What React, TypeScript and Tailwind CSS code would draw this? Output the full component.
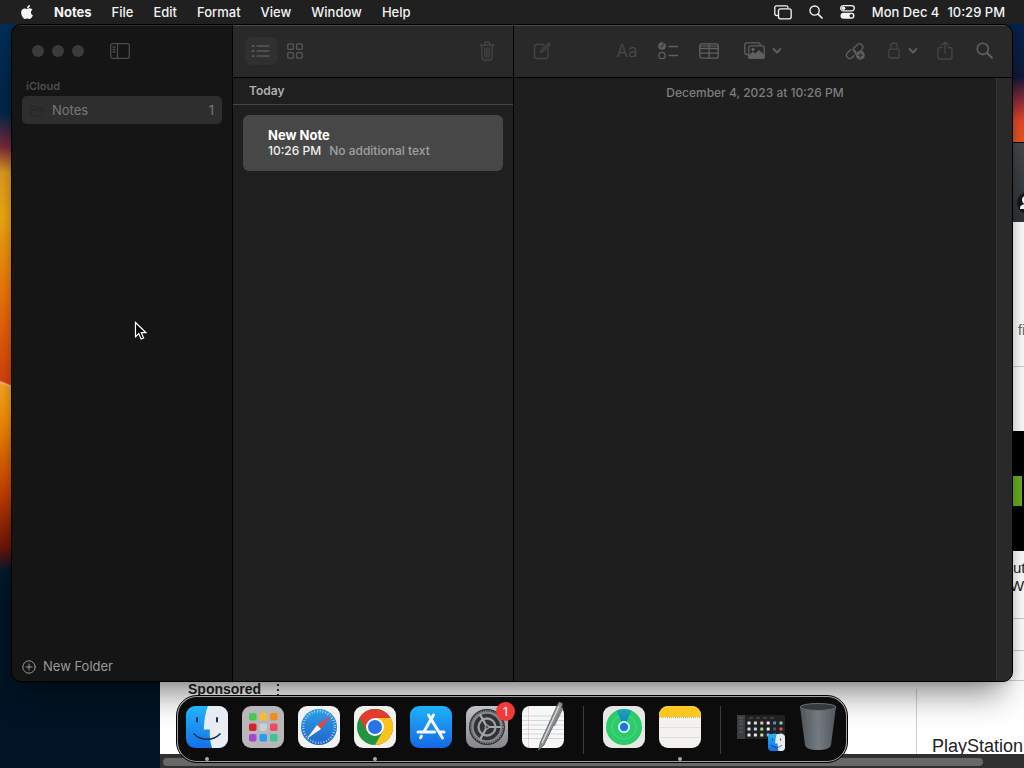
import { FaApple } from "react-icons/fa";

type IconProps = { className?: string };

const ICONS: Record<string, { w: number; h: number; body: React.ReactNode }> = {
  sidebar: {
    w: 20, h: 16,
    body: <><rect x="0.7" y="0.7" width="18.6" height="14.6" rx="2" /><path d="M7.5 1v14M3 4h2M3 6.500h2M3 9h2" /></>,
  },
  list: {
    w: 20, h: 14,
    body: <><path d="M6 2h12M6 7h12M6 12h12" /><path d="M1.500 2h1M1.500 7h1M1.500 12h1" strokeWidth="2" /></>,
  },
  grid: {
    w: 16, h: 16,
    body: <><rect x="0.8" y="0.8" width="5.600" height="5.600" rx="1" /><rect x="9.600" y="0.8" width="5.600" height="5.600" rx="1" /><rect x="0.8" y="9.600" width="5.600" height="5.600" rx="1" /><rect x="9.600" y="9.600" width="5.600" height="5.600" rx="1" /></>,
  },
  trash: {
    w: 16, h: 20,
    body: <path d="M1 4h14M5.500 4V2.200c0-.7.4-1.200 1.200-1.200h2.600c.8 0 1.200.5 1.200 1.200V4M2.500 4l.7 13c.1 1.200.8 2 2 2h5.600c1.200 0 1.900-.8 2-2l.7-13M5.700 7l.3 9M8 7v9M10.300 7 10 16" />,
  },
  compose: {
    w: 18, h: 18,
    body: <path d="M11 2.500H3.500c-1.300 0-2 .7-2 2v10c0 1.300.7 2 2 2h9.500c1.300 0 2-.7 2-2V7M7.500 10.500l.6-2L15.500 1l1.500 1.500-7.500 7.400z" />,
  },
  checklist: {
    w: 20, h: 18,
    body: <><circle cx="4" cy="4" r="3.200" fill="currentColor" /><circle cx="4" cy="13.500" r="3.200" /><path d="M11 4.500h8.500M11 13.500h8.500" /><path d="m2.500 4 1.200 1.400L6 1" stroke="#292929" strokeWidth="1" /></>,
  },
  table: {
    w: 20, h: 16,
    body: <><rect x="0.8" y="0.8" width="18.400" height="14.400" rx="2" /><path d="M1 5.500h18M1 10.200h18M10 2v13" /><path d="M1 3h18" strokeWidth="1" /></>,
  },
  photo: {
    w: 21, h: 18,
    body: <><path d="M4 12.500H2.500c-1 0-1.700-.6-1.700-1.700V2.500C.8 1.500 1.400.8 2.500.8h12c1 0 1.600.7 1.600 1.700" /><rect x="4.800" y="3.800" width="15.400" height="12.400" rx="1.700" /><path d="m5 14 4-3.500 2.200 2 3.800-3.600 5 4.500V16H5z" fill="currentColor" /><circle cx="9" cy="7.500" r="1" fill="currentColor" /></>,
  },
  chevron: { w: 10, h: 6, body: <path d="m1.500 1 3.500 3.500L8.500 1" strokeWidth="1.800" /> },
  link: {
    w: 20, h: 18,
    body: <><path d="M9.500 5.500 12 3a3.300 3.300 0 0 1 5 4.400l-1 1.100M10.500 10.500a3.300 3.300 0 0 1-1.500-5M6 7.500 2.500 10.800a3.300 3.300 0 0 0 4.700 4.700L9 13.700M8.500 7.500a3.300 3.300 0 0 1 1.700 4.700" /><circle cx="15.300" cy="13.200" r="3.800" fill="currentColor" /><path d="M15.300 11v4.400M13.100 13.200h4.400" stroke="#292929" strokeWidth="1" /></>,
  },
  lock: {
    w: 12, h: 17,
    body: <><rect x="0.8" y="7.200" width="10.400" height="8.800" rx="1.600" /><path d="M2.800 7V4.200a3.200 3.200 0 0 1 6.400 0V7" /></>,
  },
  share: {
    w: 16, h: 19,
    body: <path d="M5 6.500H3c-1.300 0-2 .7-2 2V16c0 1.300.7 2 2 2h10c1.300 0 2-.7 2-2V8.500c0-1.300-.7-2-2-2h-2M8 12V1M4.800 4 8 1l3.200 3" />,
  },
  search: {
    w: 17, h: 17,
    body: <><circle cx="6.800" cy="6.800" r="5.600" strokeWidth="1.600" /><path d="m11 11 4.800 4.800" strokeWidth="2" /></>,
  },
  plus: {
    w: 14, h: 14,
    body: <><circle cx="7" cy="7" r="6.200" strokeWidth="1" /><path d="M7 4v6M4 7h6" strokeWidth="1" /></>,
  },
  folder: { w: 14, h: 12, body: <path d="M1 10V2.500C1 1.500 1.500 1 2.500 1h2L6 2.500h5.500c1 0 1.500.5 1.500 1.500v6c0 .7-.3 1-1 1H2c-.7 0-1-.3-1-1zM1 4.800h12" strokeWidth="1" /> },
  stage: {
    w: 18, h: 15,
    body: <><path d="M3.500 10.500H2.500c-1 0-1.700-.6-1.700-1.700V2.500C.8 1.500 1.400.8 2.500.8h9.800c1 0 1.700.7 1.700 1.700" /><rect x="4.500" y="3.800" width="12.700" height="10" rx="2" /></>,
  },
  control: {
    w: 15, h: 14,
    body: <><rect x="0.7" y="0.7" width="13.600" height="5.200" rx="2.600" /><circle cx="3.500" cy="3.300" r="1.800" fill="currentColor" stroke="none" /><rect x="0.5" y="7.800" width="14" height="6" rx="3" fill="currentColor" stroke="none" /><circle cx="11.300" cy="10.800" r="1.700" fill="#202020" stroke="none" /></>,
  },
};

function Icon({ name, className }: { name: string } & IconProps) {
  const { w, h, body } = ICONS[name];
  return (
    <svg width={w} height={h} viewBox={`0 0 ${w} ${h}`} className={className} fill="none" aria-hidden="true"
      stroke="currentColor" strokeWidth="1.300" strokeLinecap="round" strokeLinejoin="round">
      {body}
    </svg>
  );
}

function ToolButton({ icon, label, className = "w-6", menu }: { icon: string; label: string; className?: string; menu?: boolean }) {
  return (
    <button aria-label={label} className={`flex h-7 items-center justify-center rounded-md ${className}`}>
      <span className="flex w-6 justify-center"><Icon name={icon} /></span>
      {menu && <Icon name="chevron" className="ml-auto text-[#606060]" />}
    </button>
  );
}

function Wallpaper() {
  return (
    <svg className="absolute inset-0 h-full w-full" viewBox="0 0 1024 744" preserveAspectRatio="none" aria-hidden="true">
      <defs>
        <linearGradient id="wl" x1="0" x2="0" y1="0" y2="744" gradientUnits="userSpaceOnUse">
          <stop offset="0" stopColor="#002d55" />
          <stop offset="0.12" stopColor="#03264a" />
          <stop offset="0.165" stopColor="#7b2a3b" />
          <stop offset="0.2" stopColor="#e09c22" />
          <stop offset="0.26" stopColor="#f0aa12" />
          <stop offset="0.37" stopColor="#f0720a" />
          <stop offset="0.48" stopColor="#d8430e" />
        </linearGradient>
        <linearGradient id="wl2" x1="0" x2="0" y1="358" y2="744" gradientUnits="userSpaceOnUse">
          <stop offset="0" stopColor="#f8aa24" />
          <stop offset="0.1" stopColor="#f58e02" />
          <stop offset="0.28" stopColor="#cb4200" />
          <stop offset="0.43" stopColor="#6a1608" />
          <stop offset="0.49" stopColor="#04192c" />
          <stop offset="0.6" stopColor="#001524" />
          <stop offset="1" stopColor="#001426" />
        </linearGradient>
        <linearGradient id="wr" x1="0" x2="0" y1="0" y2="118" gradientUnits="userSpaceOnUse">
          <stop offset="0" stopColor="#06224a" />
          <stop offset="0.45" stopColor="#12193a" />
          <stop offset="0.65" stopColor="#8c2c3c" />
          <stop offset="0.82" stopColor="#e5482c" />
          <stop offset="1" stopColor="#e8581c" />
        </linearGradient>
      </defs>
      <rect width="1024" height="744" fill="url(#wl)" />
      <path d="M0 358 40 374 1024 374V744H0z" fill="url(#wl2)" />
      <path d="m0 358 40 16" stroke="#f6b070" strokeWidth="2" />
      <rect x="512" width="512" height="200" fill="url(#wr)" />
    </svg>
  );
}

function MenuBar() {
  const menus = ["File", "Edit", "Format", "View", "Window", "Help"];
  return (
    <header className="z-40 flex h-6 shrink-0 items-center bg-[#202020] pl-5 pr-[19px] text-[13px] leading-6 font-medium text-[#f4f4f4]">
      <button aria-label="Apple menu" className="mr-5"><FaApple size={16} className="w-[14px]" /></button>
      <nav className="flex gap-5">
        <button className="font-bold">Notes</button>
        {menus.map((m) => <button key={m}>{m}</button>)}
      </nav>
      <div className="ml-auto flex items-center gap-[17px]">
        <button aria-label="Screen mirroring"><Icon name="stage" /></button>
        <button aria-label="Spotlight"><Icon name="search" className="size-[14px]" /></button>
        <button aria-label="Control Center"><Icon name="control" /></button>
        <button className="flex gap-2"><span>Mon Dec 4</span><span>10:29 PM</span></button>
      </div>
    </header>
  );
}

function BrowserWindow() {
  return (
    <section aria-label="Browser" className="absolute top-[118px] right-0 bottom-0 left-40 flex flex-col overflow-hidden bg-white font-['Liberation_Sans',sans-serif] text-[#222]">
      <div className="flex h-20 shrink-0 items-end justify-end border-t border-black bg-linear-to-b from-[#45484a] to-[#2f3436] pb-2">
        <svg width="7" height="22" viewBox="0 0 7 22" aria-hidden="true">
          <circle cx="11" cy="11" r="11" fill="#17191b" />
          <circle cx="9" cy="8" r="4" fill="#fff" />
          <path d="M3 16c0-3 3-4 6-4v5H3z" fill="#fff" />
        </svg>
      </div>
      <div className="flex min-h-0 flex-1 justify-end overflow-hidden">
        <div className="flex w-[14px] flex-col whitespace-nowrap">
          <div className="h-[145px] shrink-0 border-b border-[#ccc] pt-[98px] pl-2 text-[14px] leading-5 text-[#666]">fi</div>
          <div className="mt-16 flex h-[120px] shrink-0 items-center bg-black">
            <div className="h-[30px] w-3 bg-[#6aae20]" />
          </div>
          <p className="border-b border-[#ccc] pt-2 pb-[23px] text-[15px] leading-[18px]">
            <span className="pl-[3px]">ut</span><br />Wa
          </p>
          <div className="h-8 border-b border-[#ccc]" />
        </div>
      </div>
      <div className="flex h-[74px] shrink-0 border-t border-[#ccc]">
        <div className="flex flex-1 gap-4 pl-7 text-[14px] leading-4 font-bold">
          <span>Sponsored</span>
          <button aria-label="More options" className="flex h-4 flex-col items-center gap-[3px] pt-[3px]">
            <span className="size-[2px] shrink-0 bg-[#333]" />
            <span className="size-[2px] shrink-0 bg-[#333]" />
            <span className="size-[2px] shrink-0 bg-[#333]" />
          </button>
        </div>
        <div className="mt-2 w-[108px] overflow-hidden border-l border-[#d0d0d0] pt-[45px] pl-[15px] text-[18px] leading-6 whitespace-nowrap">
          PlayStation
        </div>
      </div>
      <div className="h-[14px] shrink-0 bg-[#303030] pt-1 pr-[41px] pl-[3px]">
        <div className="h-2 rounded-full bg-[#686868]" />
      </div>
    </section>
  );
}

function Sidebar() {
  return (
    <aside className="flex w-[220px] shrink-0 flex-col border-t border-[#303030] bg-[#151515]">
      <div className="flex h-[51px] items-center gap-2 pb-px pl-5">
        {["Close", "Minimize", "Zoom"].map((l) => (
          <button key={l} aria-label={l} className="size-3 rounded-full bg-[#3b3b3b]" />
        ))}
        <button aria-label="Toggle sidebar" className="ml-[18px] text-[#4b4b4b]"><Icon name="sidebar" /></button>
      </div>
      <h2 className="pb-px pl-[14px] text-[11px] leading-[18px] font-semibold text-[#4c4c4c]">iCloud</h2>
      <button className="mx-[10px] flex h-7 items-center rounded-[5px] bg-[#2e2e2e] pt-px pr-2 pl-2 text-[13px] text-[#777]">
        <Icon name="folder" className="mr-2 text-[#262626]" />
        <span>Notes</span>
        <span className="ml-auto">1</span>
      </button>
      <button className="mt-auto flex h-7 items-center gap-[7px] pl-[10px] text-[13px] text-[#9a9a9a]">
        <Icon name="plus" />
        New Folder
      </button>
    </aside>
  );
}

function NoteList() {
  return (
    <section aria-label="Note list" className="flex w-[282px] shrink-0 flex-col border-x border-black bg-[#1f1f1f]">
      <div className="flex h-[53px] items-center gap-[2px] border-t border-b border-t-[#4c4c4c] border-b-black bg-[#292929] pr-[10px] pb-[2px] pl-3 text-[#585858]">
        <ToolButton icon="list" label="List view" className="w-8 bg-[#303030]" />
        <ToolButton icon="grid" label="Gallery view" className="w-8" />
        <ToolButton icon="trash" label="Delete" className="ml-auto w-8 text-[#454545]" />
      </div>
      <h2 className="border-b border-[#464646] pl-4 text-[12px] leading-[26px] font-semibold text-[#b0b0b0]">Today</h2>
      <button className="mx-[10px] mt-[10px] h-14 rounded-md bg-[#474747] pl-[25px] text-left">
        <span className="block text-[13px] leading-4 font-bold text-white">New Note</span>
        <span className="flex gap-2 text-[12px] leading-4 font-medium text-[#a0a0a0]">
          <span className="text-[#efefef]">10:26 PM</span>
          <span>No additional text</span>
        </span>
      </button>
    </section>
  );
}

function Editor() {
  return (
    <main className="flex min-w-0 flex-1 flex-col">
      <div className="flex h-[53px] shrink-0 items-center justify-between border-t border-b border-t-[#4c4c4c] border-b-black bg-[#292929] px-4 pb-[2px] text-[#606060]">
        <ToolButton icon="compose" label="New note" className="w-6 text-[#454545]" />
        <div className="flex gap-[17px]">
          <button className="h-7 w-6 text-[17px] leading-7 text-[#454545]">Aa</button>
          <ToolButton icon="checklist" label="Checklist" />
          <ToolButton icon="table" label="Table" />
          <ToolButton icon="photo" label="Media" className="ml-1 w-10" menu />
        </div>
        <div className="flex gap-[15px]">
          <ToolButton icon="link" label="Link note" />
          <ToolButton icon="lock" label="Lock note" className="w-9 text-[#454545]" menu />
          <ToolButton icon="share" label="Share" className="w-6 text-[#454545]" />
          <ToolButton icon="search" label="Search" />
        </div>
      </div>
      <div className="flex flex-1 bg-[#1e1e1e]">
        <p className="flex-1 pt-[6px] text-center text-[12px] leading-[18px] font-medium text-[#7d7d7d]">December 4, 2023 at 10:26 PM</p>
        <div className="w-4 border-l border-[#363636] bg-[#292929]" />
      </div>
    </main>
  );
}

function FinderIcon({ className = "size-[42px]" }: IconProps) {
  return (
    <svg viewBox="0 0 42 42" className={className} aria-hidden="true">
      <defs>
        <linearGradient id="fb" x1="0" x2="0" y1="0" y2="1"><stop stopColor="#22b4fb" /><stop offset="1" stopColor="#1470ea" /></linearGradient>
        <clipPath id="fc"><rect width="42" height="42" rx="9" /></clipPath>
      </defs>
      <g clipPath="url(#fc)">
        <rect width="42" height="42" fill="url(#fb)" />
        <path d="M22 0c-2.500 6-4 14-4.200 23.500h6C23.500 30 24 36 26 42h16V0z" fill="#e9edf3" />
      </g>
      <path d="M11 12v3.500M31 12v3.500" stroke="#17304d" strokeWidth="2" strokeLinecap="round" />
      <path d="M8 28c7 7 19 7 26 0" fill="none" stroke="#17304d" strokeWidth="1.700" strokeLinecap="round" />
    </svg>
  );
}

function LaunchpadIcon() {
  const colors = ["#4cc653", "#f5bd2c", "#f38b20", "#d5222d", "#c7d0d6", "#ed4963", "#a747c9", "#279df0", "#3bc48d"];
  return (
    <svg viewBox="0 0 42 42" className="size-[42px]" aria-hidden="true">
      <rect width="42" height="42" rx="9" fill="#b7b7b9" />
      {colors.map((c, i) => (
        <rect key={c} x={7 + (i % 3) * 10.500} y={7 + Math.floor(i / 3) * 10.500} width="7.500" height="7.500" rx="1.800" fill={c} />
      ))}
    </svg>
  );
}

function SafariIcon() {
  return (
    <svg viewBox="0 0 42 42" className="size-[42px]" aria-hidden="true">
      <defs><linearGradient id="sf" x1="0" x2="0" y1="0" y2="1"><stop stopColor="#2b9fe6" /><stop offset="1" stopColor="#2065c8" /></linearGradient></defs>
      <rect width="42" height="42" rx="9" fill="#f1f1f2" />
      <circle cx="21" cy="21" r="18" fill="url(#sf)" />
      <circle cx="21" cy="21" r="15.800" fill="none" stroke="#d5eafa" strokeWidth="2.400" strokeDasharray="0.7 2.070" />
      <path d="M33.500 9 19 19l4 4z" fill="#ec4346" />
      <path d="M8.500 33 19 19l4 4z" fill="#f5f5f5" />
    </svg>
  );
}

function ChromeIcon() {
  return (
    <svg viewBox="0 0 42 42" className="size-[42px]" aria-hidden="true">
      <rect width="42" height="42" rx="9" fill="#f2f1ee" />
      <circle cx="21" cy="21" r="18" fill="#229342" />
      <path d="M28.800 25.500 21 39a18 18 0 0 0 15.600-27H21z" fill="#fcc31e" />
      <path d="M5.400 12a18 18 0 0 1 31.200 0H21l-7.800 13.500z" fill="#e33b2e" />
      <circle cx="21" cy="21" r="9" fill="#fff" />
      <circle cx="21" cy="21" r="7" fill="#2974e8" />
    </svg>
  );
}

function AppStoreIcon() {
  return (
    <svg viewBox="0 0 42 42" className="size-[42px]" aria-hidden="true">
      <defs><linearGradient id="as" x1="0" x2="0" y1="0" y2="1"><stop stopColor="#1eb2f8" /><stop offset="1" stopColor="#1768e6" /></linearGradient></defs>
      <rect width="42" height="42" rx="9" fill="url(#as)" />
      <g stroke="#f3f7fc" strokeWidth="3" strokeLinecap="round">
        <path d="m23.500 9-9.500 16.500M18.500 9l14 23M8 26h16.500M29.500 26H34M11.500 30l-1 1.700" />
      </g>
    </svg>
  );
}

function SettingsIcon() {
  return (
    <svg viewBox="0 0 42 42" className="size-[42px]" aria-hidden="true">
      <defs><linearGradient id="st" x1="0" x2="0" y1="0" y2="1"><stop stopColor="#c2c3c5" /><stop offset="1" stopColor="#85868a" /></linearGradient></defs>
      <rect width="42" height="42" rx="9" fill="url(#st)" />
      <circle cx="21" cy="21" r="18" fill="#303236" />
      <circle cx="21" cy="21" r="14.500" fill="none" stroke="#85878a" strokeWidth="2.500" />
      <circle cx="21" cy="21" r="16.300" fill="none" stroke="#85878a" strokeWidth="1.300" strokeDasharray="1.200 1.200" />
      <circle cx="21" cy="21" r="8.500" fill="none" stroke="#9a9c9f" strokeWidth="2.300" />
      <path d="M21 21h14M21 21l-7-12.500M21 21l-7 12.500" stroke="#a5a7aa" strokeWidth="2.200" />
      <circle cx="21" cy="21" r="2" fill="#56585b" stroke="#a5a7aa" strokeWidth="1" />
    </svg>
  );
}

function TextEditIcon() {
  return (
    <svg viewBox="0 0 42 42" className="size-[42px] overflow-visible" aria-hidden="true">
      <rect width="42" height="42" rx="8" fill="#f7f7f7" />
      <path d="M0 10h42M0 14.500h42M0 19h42M0 23.500h42M0 28h42M0 32.500h42" stroke="#c4c6c9" strokeWidth="0.700" />
      <path d="M6.500 0v42" stroke="#dfb9b9" strokeWidth="0.600" />
      <path d="m37-4 3.500 1.500-1 5L22 39l-5.500 5 2-8L34.500 1z" fill="#8e9294" stroke="#55595b" strokeWidth="0.800" />
      <path d="M37 0 20 37" stroke="#d8dcde" strokeWidth="1.300" />
      <path d="m41 2-9 18" stroke="#777b7d" strokeWidth="1.200" />
    </svg>
  );
}

function FindMyIcon() {
  return (
    <svg viewBox="0 0 42 42" className="size-[42px]" aria-hidden="true">
      <defs><linearGradient id="fm" x1="0" x2="0" y1="0" y2="1"><stop stopColor="#1aa7a8" /><stop offset="1" stopColor="#1478e0" /></linearGradient></defs>
      <rect width="42" height="42" rx="9" fill="#e6e8e6" />
      <circle cx="21" cy="21" r="18" fill="#2bcc68" />
      <circle cx="21" cy="21" r="12" fill="none" stroke="#52d886" strokeWidth="1" />
      <path d="M21 21 13.500 4.700a18 18 0 0 1 15 0z" fill="url(#fm)" />
      <circle cx="21" cy="21" r="6" fill="#e8f6fa" />
      <circle cx="21" cy="21" r="4.200" fill="#1878d5" />
    </svg>
  );
}

function NotesIcon() {
  return (
    <svg viewBox="0 0 42 42" className="size-[42px]" aria-hidden="true">
      <rect width="42" height="42" rx="9" fill="#f3f2ef" />
      <path d="M0 11V9a9 9 0 0 1 9-9h24a9 9 0 0 1 9 9v2z" fill="#fcc71f" />
      <path d="M0 11.500h42" stroke="#bda46a" strokeWidth="0.800" strokeDasharray="1 1" />
      <path d="M0 21.500h42M0 31.500h42" stroke="#dcdbd8" strokeWidth="0.800" />
    </svg>
  );
}

function MinimizedWindow() {
  const dots = ["#eee", "#d8e6d0", "#e0c9a0", "#f0f0f0", "#5a8fc0", "#8fc5bf", "#ddd", "#bfd9ec", "#a5d9a0", "#eee", "#555", "#e05050", "#f0f0f0", "#eee", "#e3d6a0", "#6bb7ea", "#d66", "#ddd"];
  return (
    <div className="relative">
      <svg width="48" height="24" viewBox="0 0 48 24" aria-hidden="true">
        <rect width="48" height="24" rx="1" fill="#202124" />
        <path d="M0 0h8v24H0z" fill="#3c3d3f" />
        <path d="M2 3h4M2 6h4M2 9h4M2 13h4M2 17h4M12 3h4M19 3h4M26 3h4M33 3h4" stroke="#696a6c" strokeWidth="0.800" />
        {dots.map((c, i) => <rect key={i} x={10.500 + (i % 6) * 6.400} y={6.500 + Math.floor(i / 6) * 6} width="3" height="3" rx="0.600" fill={c} />)}
      </svg>
      <FinderIcon className="absolute right-0 -bottom-3 size-[17px]" />
    </div>
  );
}

function TrashIcon() {
  return (
    <svg width="38" height="48" viewBox="0 0 38 48" aria-hidden="true">
      <defs><linearGradient id="tr" x1="0" x2="1" y1="0" y2="0"><stop stopColor="#4d555b" /><stop offset="0.5" stopColor="#737a80" /><stop offset="1" stopColor="#50575d" /></linearGradient></defs>
      <path d="M1 4 6 42c.6 3 5 5 13 5s12.400-2 13-5L37 4z" fill="url(#tr)" />
      <path d="m8 8 3 34M14 9l1 35M20 9v35M26 9l-2 35M31 8l-4 34" stroke="#838b90" strokeWidth="0.500" opacity="0.300" />
      <ellipse cx="19" cy="4" rx="18" ry="3.500" fill="#343a3e" stroke="#666e73" strokeWidth="1" />
    </svg>
  );
}

function DockItem({ label, running, badge, children }: { label: string; running?: boolean; badge?: number; children: React.ReactNode }) {
  return (
    <button aria-label={label} className="relative flex h-[42px] items-center justify-center">
      {children}
      {badge && (
        <span className="absolute -top-1 -right-[7px] flex size-[19px] items-center justify-center rounded-full bg-[#f23b37] text-[12px] text-white">{badge}</span>
      )}
      {running && <span className="absolute -bottom-[13px] left-1/2 size-1 -translate-x-1/2 rounded-full bg-[#a8a8a8]" />}
    </button>
  );
}

function Dock() {
  return (
    <nav aria-label="Dock" className="absolute bottom-[6px] left-1/2 z-30 flex h-[66px] -translate-x-1/2 items-start gap-[14px] rounded-[20px] border border-[#a0a0a0] bg-[#0c0c0c] pt-[9px] pr-[9px] pl-2 outline outline-black">
      <DockItem label="Finder" running><FinderIcon /></DockItem>
      <DockItem label="Launchpad"><LaunchpadIcon /></DockItem>
      <DockItem label="Safari"><SafariIcon /></DockItem>
      <DockItem label="Google Chrome" running><ChromeIcon /></DockItem>
      <DockItem label="App Store"><AppStoreIcon /></DockItem>
      <DockItem label="System Settings" badge={1}><SettingsIcon /></DockItem>
      <DockItem label="TextEdit"><TextEditIcon /></DockItem>
      <div className="mx-[5px] h-12 w-px bg-[#3c3c3c]" />
      <DockItem label="Find My"><FindMyIcon /></DockItem>
      <DockItem label="Notes" running><NotesIcon /></DockItem>
      <div className="mr-[2px] ml-[5px] h-12 w-px bg-[#3c3c3c]" />
      <DockItem label="Finder window"><MinimizedWindow /></DockItem>
      <DockItem label="Trash"><TrashIcon /></DockItem>
    </nav>
  );
}

export default function App() {
  return (
    <div className="flex h-screen flex-col overflow-hidden bg-[#001426] font-[Inter,sans-serif]">
      <MenuBar />
      <div className="relative flex-1">
        <Wallpaper />
        <BrowserWindow />
        <div className="absolute top-0 right-[11px] bottom-[86px] left-[11px] z-20 flex overflow-hidden rounded-[10px] border border-black bg-[#151515] shadow-[0_22px_30px_-10px_rgba(0,0,0,0.45),0_0_8px_rgba(0,0,0,0.15)]">
          <Sidebar />
          <NoteList />
          <Editor />
        </div>
        <Dock />
        <svg className="absolute top-[297px] left-[134px] z-50" width="14" height="21" viewBox="0 0 14 21" aria-hidden="true">
          <path d="M1.500 1.500v14.300l3.300-3.200 2.300 5.400 2.500-1-2.300-5.300h4.600z" fill="#050505" stroke="#fff" strokeWidth="1.200" />
        </svg>
      </div>
    </div>
  );
}
